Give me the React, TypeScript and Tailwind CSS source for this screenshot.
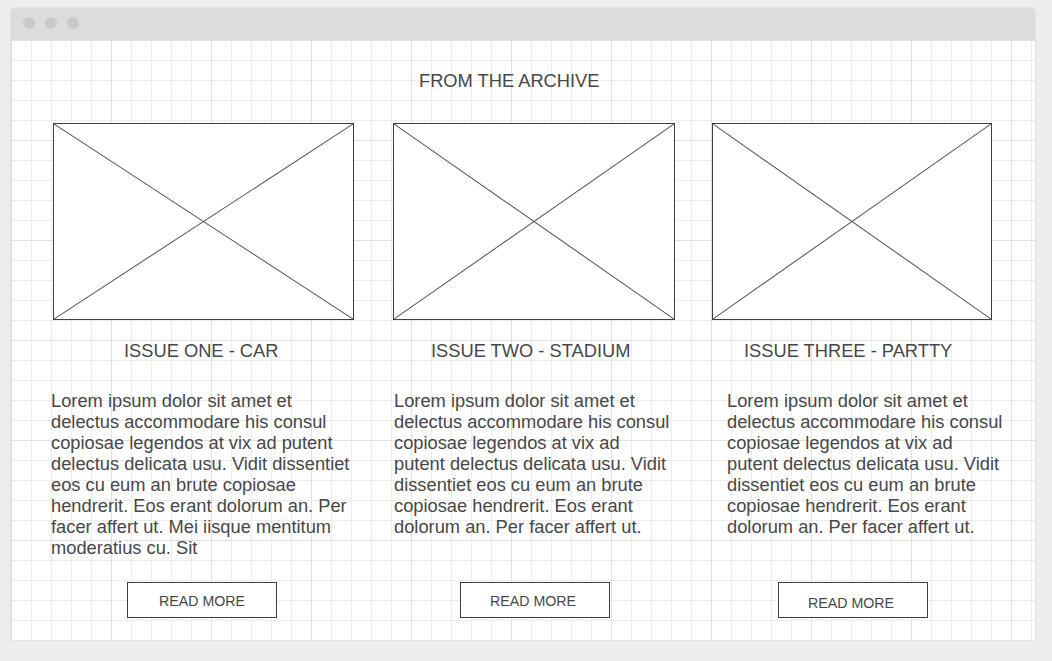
import React from 'react';

const lorem1 =
  'Lorem ipsum dolor sit amet et delectus accommodare his consul copiosae legendos at vix ad putent delectus delicata usu. Vidit dissentiet eos cu eum an brute copiosae hendrerit. Eos erant dolorum an. Per facer affert ut. Mei iisque mentitum moderatius cu. Sit';
const lorem2 =
  'Lorem ipsum dolor sit amet et delectus accommodare his consul copiosae legendos at vix ad putent delectus delicata usu. Vidit dissentiet eos cu eum an brute copiosae hendrerit. Eos erant dolorum an. Per facer affert ut.';

function Placeholder({ className }: { className: string }) {
  return (
    <div className={`border border-[#3f3f3f] bg-white ${className}`}>
      <svg className="block w-full h-full" viewBox="0 0 100 100" preserveAspectRatio="none">
        <line x1="0" y1="0" x2="100" y2="100" stroke="#505050" strokeWidth="1" vectorEffect="non-scaling-stroke" />
        <line x1="100" y1="0" x2="0" y2="100" stroke="#505050" strokeWidth="1" vectorEffect="non-scaling-stroke" />
      </svg>
    </div>
  );
}

function ReadMore({ className }: { className: string }) {
  return (
    <button
      className={`w-[150px] h-[36px] border border-[#3f3f3f] bg-white flex items-center justify-center text-[14.2px] leading-[16px] text-[#474747] ${className}`}
    >
      READ MORE
    </button>
  );
}

export default function App() {
  return (
    <div className="min-h-screen bg-[#ededed] pt-[7px] pl-[10px] font-['Liberation_Sans',Arial,sans-serif] text-[#474747]">
      <div className="w-[1026px] h-[634px] rounded-t-[5px] border border-[#e2e2e2] bg-white overflow-hidden flex flex-col">
        <div className="h-[32px] shrink-0 bg-[#dcdcdc] flex items-start gap-[10px] pl-[12px] pt-[9px]">
          <span className="w-[12px] h-[12px] rounded-full bg-[#c9c9c9]" />
          <span className="w-[12px] h-[12px] rounded-full bg-[#c9c9c9]" />
          <span className="w-[12px] h-[12px] rounded-full bg-[#c9c9c9]" />
        </div>

        <div className="flex-1 bg-white bg-[linear-gradient(to_right,#e1e1e1_1px,transparent_1px),linear-gradient(to_bottom,#e1e1e1_1px,transparent_1px),linear-gradient(to_right,#ededed_1px,transparent_1px),linear-gradient(to_bottom,#ededed_1px,transparent_1px)] bg-size-[100px_100px,100px_100px,20px_20px,20px_20px]">
          <h1 className="pt-[30px] pl-[408px] text-[18.3px] leading-[21px] font-normal">FROM THE ARCHIVE</h1>

          <div className="mt-[32px] pl-[40px] flex items-start">
            {/* issue one */}
            <div className="w-[304px] shrink-0">
              <Placeholder className="ml-[2px] w-[301px] h-[197px]" />
              <h2 className="mt-[20px] pl-[73px] text-[18.3px] leading-[21px]">ISSUE ONE - CAR</h2>
              <p className="mt-[29px] h-[168px] text-[18.3px] leading-[21px]">{lorem1}</p>
              <ReadMore className="mt-[24px] ml-[76px] pt-[2px]" />
            </div>

            {/* issue two */}
            <div className="ml-[38px] w-[282px] shrink-0">
              <Placeholder className="w-[282px] h-[197px]" />
              <h2 className="mt-[20px] pl-[38px] text-[18.3px] leading-[21px]">ISSUE TWO - STADIUM</h2>
              <p className="mt-[29px] ml-[1px] w-[280px] h-[168px] text-[18.3px] leading-[21px]">{lorem2}</p>
              <ReadMore className="mt-[24px] ml-[67px] pt-[2px] pr-[4px]" />
            </div>

            {/* issue three */}
            <div className="ml-[37px] w-[296px] shrink-0">
              <Placeholder className="w-[280px] h-[197px]" />
              <h2 className="mt-[20px] pl-[32px] text-[18.3px] leading-[21px]">ISSUE THREE - PARTTY</h2>
              <p className="mt-[29px] ml-[15px] w-[281px] h-[168px] text-[18.3px] leading-[21px]">{lorem2}</p>
              <ReadMore className="mt-[24px] ml-[66px] pt-[6px] pr-[4px]" />
            </div>
          </div>
        </div>
      </div>
    </div>
  );
}
